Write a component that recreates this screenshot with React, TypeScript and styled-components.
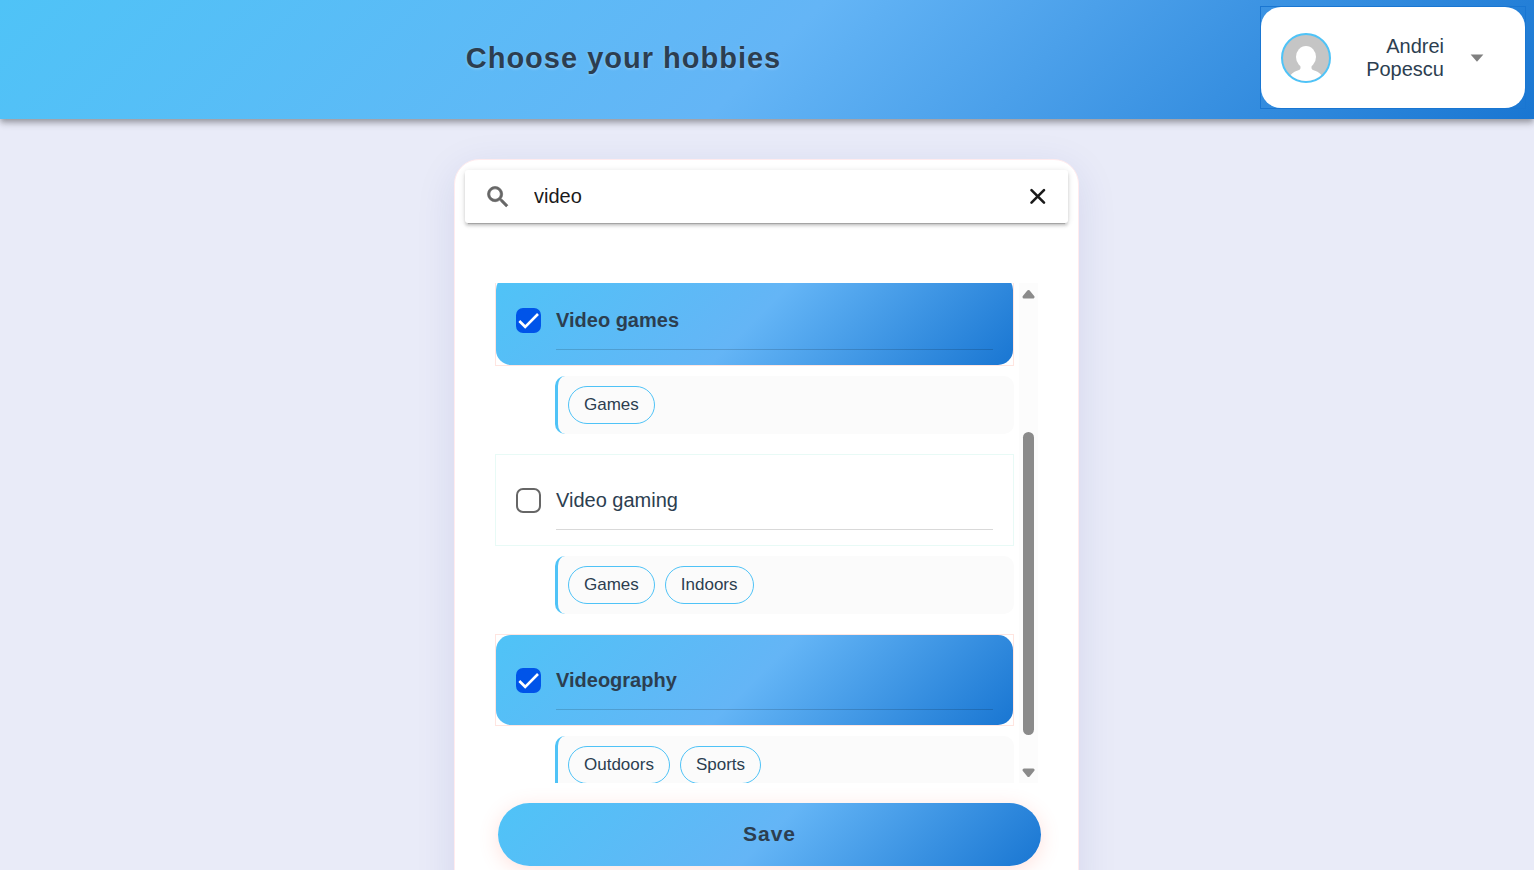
import React, { useLayoutEffect, useRef, useState } from 'react';
import styled, { createGlobalStyle } from 'styled-components';

const GRADIENT = 'linear-gradient(135deg, #4fc3f7 0%, #64b5f6 50%, #1976d2 100%)';
const INK = '#2c3e50';
const SKY = '#4fc3f7';

const GlobalStyle = createGlobalStyle`
  *, *::before, *::after { box-sizing: border-box; }
  body {
    margin: 0;
    background: #e9ebf8;
    color: ${INK};
    font-family: "Liberation Sans", Arial, sans-serif;
    font-size: 20px;
  }
  button, input { font: inherit; color: inherit; }
`;

const Page = styled.div`
  display: flex;
  flex-direction: column;
  height: 100vh;
`;

const Header = styled.header`
  position: relative;
  z-index: 1;
  display: flex;
  align-items: center;
  gap: 13px;
  padding: 6px 8px 10px 0;
  background: ${GRADIENT};
  box-shadow: 0 3px 5px -1px rgba(0, 0, 0, 0.2), 0 5px 6px 0 rgba(0, 0, 0, 0.14),
    0 1px 12px 0 rgba(0, 0, 0, 0.12);
`;

const Title = styled.h1`
  flex: 1;
  margin: 0;
  text-align: center;
  font-size: 29px;
  line-height: 36px;
  letter-spacing: 1px;
  text-shadow: 0 1px 3px rgba(255, 255, 255, 0.3);
`;

const Profile = styled.button`
  width: 266px;
  padding: 0;
  border: 1px solid #1976d2;
  background: transparent;
  cursor: pointer;
`;

const ProfileInner = styled.span`
  display: flex;
  align-items: center;
  padding: 26px 41px 25px 20px;
  border-radius: 20px;
  background: #fff;
`;

const Avatar = styled.svg`
  flex: none;
  width: 50px;
  height: 50px;
  border: 2px solid ${SKY};
  border-radius: 50%;
  background: #c5c5c5;
`;

const ProfileName = styled.span`
  flex: 1;
  padding: 0 26px 0 33px;
  text-align: right;
  line-height: 23px;
`;

const Caret = styled.svg`
  flex: none;
  width: 14px;
  height: 8px;
  fill: #808080;
`;

const Main = styled.main`
  flex: 1;
  min-height: 0;
  overflow-y: auto;
  scrollbar-width: none;
  padding: 40px 21px 40px 20px;
`;

const Card = styled.section`
  max-width: 625px;
  margin: 0 auto;
  padding: 10px 10px 40px;
  border: 1px solid #ffebee;
  border-radius: 25px;
  background: #fff;
  box-shadow: 0 10px 40px rgba(31, 38, 135, 0.1);
`;

const SearchBar = styled.form`
  display: flex;
  align-items: center;
  height: 53px;
  padding: 0 16px 0 19px;
  border-radius: 3px;
  background: #fff;
  box-shadow: 0 3px 3px 0 rgba(0, 0, 0, 0.14), 0 4px 1px -3px rgba(0, 0, 0, 0.2),
    0 1px 6px 0 rgba(0, 0, 0, 0.12);
`;

const SearchIcon = styled.svg`
  flex: none;
  width: 28px;
  height: 28px;
  fill: #666;
  stroke: #666;
  stroke-width: 0.6;
`;

const SearchInput = styled.input`
  flex: 1;
  min-width: 0;
  height: 30px;
  margin: 0 20px;
  padding: 0 0 0 2px;
  border: 0;
  outline: 0;
  background: transparent;
  color: #1a1a1a;
`;

const ClearButton = styled.button`
  display: flex;
  padding: 0;
  border: 0;
  background: transparent;
  cursor: pointer;
`;

const ClearIcon = styled.svg`
  width: 28px;
  height: 28px;
  fill: none;
  stroke: #1a1a1a;
  stroke-width: 2.6;
  stroke-linecap: round;
`;

const ListFrame = styled.div`
  display: flex;
  gap: 5px;
  height: 500px;
  margin: 60px 30px 20px;
`;

const HobbyList = styled.ul`
  flex: 1;
  margin: 0;
  padding: 0;
  overflow-y: auto;
  scrollbar-width: none;
  list-style: none;
`;

const Hobby = styled.li`
  padding-bottom: 20px;
`;

const HobbyCard = styled.label<{ $checked: boolean }>`
  display: block;
  border: 1px solid ${(p) => (p.$checked ? '#ffe5e0' : '#e8faf6')};
  font-weight: ${(p) => (p.$checked ? 700 : 400)};
  cursor: pointer;
`;

const HobbyRow = styled.span<{ $checked: boolean }>`
  display: flex;
  align-items: center;
  gap: 15px;
  padding: 15px 20px;
  border-radius: 15px;
  background: ${(p) => (p.$checked ? GRADIENT : '#fff')};
`;

const HobbyName = styled.span`
  flex: 1;
  padding-top: 2px;
  border-bottom: 1px solid rgba(0, 0, 0, 0.15);
  line-height: 57px;
`;

const TickBox = styled.span`
  position: relative;
  display: flex;
  width: 25px;
  height: 25px;
`;

const TickInput = styled.input`
  appearance: none;
  width: 25px;
  height: 25px;
  margin: 0;
  border: 2px solid #666;
  border-radius: 7px;
  background: #fff;
  cursor: pointer;

  &:checked {
    border-color: #0054e9;
    background: #0054e9;
  }
`;

const TickMark = styled.svg`
  position: absolute;
  inset: 0;
  width: 25px;
  height: 25px;
  fill: none;
  stroke: #fff;
  stroke-width: 2.6;
  pointer-events: none;
`;

const Tags = styled.div`
  display: flex;
  flex-wrap: wrap;
  gap: 10px;
  margin: 10px 0 0 60px;
  padding: 10px;
  border-left: 3px solid ${SKY};
  border-radius: 10px;
  background: #fbfbfb;
`;

const Tag = styled.span`
  padding: 0 15px;
  border: 1px solid ${SKY};
  border-radius: 19px;
  font-size: 17px;
  line-height: 36px;
`;

const ScrollTrack = styled.div`
  display: flex;
  flex-direction: column;
  align-items: center;
  width: 19px;
  padding: 6px 0 5px;
  background: #fcfcfc;
`;

const ScrollArrow = styled.svg`
  flex: none;
  width: 13px;
  height: 10px;
  fill: #8b8b8b;
  stroke: #8b8b8b;
  stroke-width: 3;
  stroke-linejoin: round;
`;

const ScrollGap = styled.div<{ $share: number }>`
  flex: ${(p) => p.$share} 0 0;
`;

const ScrollThumb = styled.div<{ $share: number }>`
  flex: ${(p) => p.$share} 0 0;
  width: 11px;
  border-radius: 6px;
  background: #8b8b8b;
`;

const SaveButton = styled.button`
  display: block;
  width: calc(100% - 60px);
  height: 63px;
  margin: 0 27px 0 33px;
  padding: 0 0 2px;
  border: 0;
  border-radius: 32px;
  background: ${GRADIENT};
  box-shadow: 0 4px 20px rgba(255, 107, 87, 0.2);
  font-size: 21px;
  font-weight: 700;
  letter-spacing: 1px;
  cursor: pointer;
`;

type HobbyData = { id: string; name: string; tags: string[] };

const HOBBIES: HobbyData[] = [
  { id: 'video-games', name: 'Video games', tags: ['Games'] },
  { id: 'video-gaming', name: 'Video gaming', tags: ['Games', 'Indoors'] },
  { id: 'videography', name: 'Videography', tags: ['Outdoors', 'Sports'] },
];

export default function App() {
  const [query, setQuery] = useState('video');
  const [chosen, setChosen] = useState<string[]>(['video-games', 'videography']);
  const listRef = useRef<HTMLUListElement>(null);

  useLayoutEffect(() => {
    if (listRef.current) listRef.current.scrollTop = 9;
  }, []);

  const toggle = (id: string) =>
    setChosen((ids) => (ids.includes(id) ? ids.filter((i) => i !== id) : [...ids, id]));

  const visible = HOBBIES.filter((h) => h.name.toLowerCase().includes(query.toLowerCase()));

  return (
    <>
      <GlobalStyle />
      <Page>
        <Header>
          <Title>Choose your hobbies</Title>
          <Profile type="button">
            <ProfileInner>
              <Avatar viewBox="0 0 46 46" aria-hidden="true">
                <ellipse cx="23" cy="22" rx="10" ry="11" fill="#fff" />
                <path
                  d="M17.500 29V33C17.500 34.500 16 35.200 14 35.800C10.500 37 8 39 6 42V46H40V42C38 39 35.500 37 32 35.800C30 35.200 28.500 34.500 28.500 33V29Z"
                  fill="#fff"
                />
              </Avatar>
              <ProfileName>Andrei Popescu</ProfileName>
              <Caret viewBox="0 0 14 8" aria-hidden="true">
                <path d="M.6 .4h12.800L7 7.800z" />
              </Caret>
            </ProfileInner>
          </Profile>
        </Header>
        <Main>
          <Card>
            <SearchBar role="search" onSubmit={(e) => e.preventDefault()}>
              <SearchIcon viewBox="0 0 24 24" aria-hidden="true">
                <path d="M15.5 14h-.79l-.28-.27A6.471 6.471 0 0 0 16 9.500 6.500 6.500 0 1 0 9.500 16c1.610 0 3.090-.59 4.230-1.570l.27.28v.79l5 4.990L20.490 19l-4.990-5zm-6 0C7.010 14 5 11.990 5 9.500S7.010 5 9.500 5 14 7.010 14 9.500 11.990 14 9.500 14z" />
              </SearchIcon>
              <SearchInput
                type="text"
                aria-label="Search hobbies"
                value={query}
                onChange={(e) => setQuery(e.target.value)}
              />
              <ClearButton type="button" aria-label="Clear search" onClick={() => setQuery('')}>
                <ClearIcon viewBox="0 0 28 28">
                  <path d="M7.500 7.200l12.500 12.500M20 7.200L7.500 19.700" />
                </ClearIcon>
              </ClearButton>
            </SearchBar>
            <ListFrame>
              <HobbyList ref={listRef}>
                {visible.map((hobby) => {
                  const checked = chosen.includes(hobby.id);
                  return (
                    <Hobby key={hobby.id}>
                      <HobbyCard htmlFor={hobby.id} $checked={checked}>
                        <HobbyRow $checked={checked}>
                          <TickBox>
                            <TickInput
                              type="checkbox"
                              id={hobby.id}
                              checked={checked}
                              onChange={() => toggle(hobby.id)}
                            />
                            {checked && (
                              <TickMark viewBox="0 0 25 25" aria-hidden="true">
                                <path d="M3.300 13L9.200 18.800L22 6" />
                              </TickMark>
                            )}
                          </TickBox>
                          <HobbyName>{hobby.name}</HobbyName>
                        </HobbyRow>
                      </HobbyCard>
                      <Tags>
                        {hobby.tags.map((tag) => (
                          <Tag key={tag}>{tag}</Tag>
                        ))}
                      </Tags>
                    </Hobby>
                  );
                })}
              </HobbyList>
              <ScrollTrack aria-hidden="true">
                <ScrollArrow viewBox="0 0 13 10">
                  <path d="M6.500 2.500L11 8H2z" />
                </ScrollArrow>
                <ScrollGap $share={133} />
                <ScrollThumb $share={303} />
                <ScrollGap $share={33} />
                <ScrollArrow viewBox="0 0 13 10">
                  <path d="M6.500 7.500L11 2H2z" />
                </ScrollArrow>
              </ScrollTrack>
            </ListFrame>
            <SaveButton type="button">Save</SaveButton>
          </Card>
        </Main>
      </Page>
    </>
  );
}
